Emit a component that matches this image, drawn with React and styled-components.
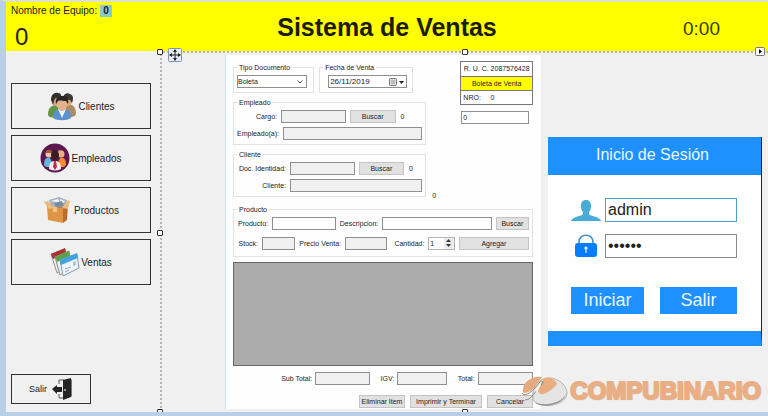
import React from "react";
import styled, { createGlobalStyle } from "styled-components";

const sans = `"Liberation Sans", Arial, sans-serif`;

const GlobalStyle = createGlobalStyle`
  *, *::before, *::after { box-sizing: border-box; }
  body { margin: 0; background: #f0f0f0; color: #222; font-family: ${sans}; }
  button, input, select { font: inherit; color: inherit; margin: 0; border-radius: 0; }
`;

const Window = styled.div`
  min-height: 100vh;
  display: flex;
  flex-direction: column;
  overflow: hidden;
  background: #f0f0f0;
  border-top: 2px solid #dfe2c8;
  border-left: 6px solid #b9cfe8;
  border-bottom: 4px solid #b9cfe8;
`;

const Header = styled.header`
  display: grid;
  grid-template-columns: 1fr 238px 1fr;
  align-items: center;
  height: 49px;
  background: #ffff00;
`;

const Machine = styled.div`
  align-self: start;
  padding: 2px 0 0 5px;
  font-size: 10px;
  line-height: 13px;
`;

const MachineValue = styled.b`
  display: inline-block;
  width: 12px;
  line-height: 12px;
  text-align: center;
  color: #123;
  background: #8cc8c8;
`;

const Count = styled.div`
  padding-left: 4px;
  font-size: 24px;
  line-height: 28px;
  margin-top: 6px;
`;

const Title = styled.h1`
  margin: 0;
  font-size: 25px;
  line-height: 30px;
  font-weight: bold;
  text-align: center;
  white-space: nowrap;
  color: #1c1c00;
`;

const Clock = styled.time`
  justify-self: end;
  padding-right: 48px;
  font-size: 19px;
  line-height: 22px;
  color: #3a3a00;
  padding-top: 4px;
`;

const Body = styled.div`
  flex: 1;
  display: flex;
`;

const Sidebar = styled.nav`
  flex: 0 0 154px;
  display: flex;
  flex-direction: column;
  gap: 6px;
  padding: 32px 9px 8px 5px;
`;

const NavButton = styled.button`
  display: flex;
  align-items: center;
  justify-content: center;
  gap: ${(p) => (p.$small ? "4px" : "1px")};
  width: ${(p) => (p.$small ? "80px" : "100%")};
  height: ${(p) => (p.$small ? "30px" : "46px")};
  margin-top: ${(p) => (p.$small ? "auto" : "0")};
  padding: 0;
  border: 1px solid #333;
  background: #f0f0f0;
  font-size: ${(p) => (p.$small ? "9px" : "10px")};
  svg { flex: none; }
`;

const Workspace = styled.main`
  position: relative;
  flex: 1;
  display: grid;
  grid-template-columns: 63fr 316fr 7fr 214fr 6fr;
  padding: 2px 0 3px;
  border-top: 2px dotted #b5b5a0;
  border-left: 2px dotted #b5b5b5;
`;

const Handle = styled.i`
  position: absolute;
  left: ${(p) => p.$left};
  top: ${(p) => p.$top};
  width: 6px;
  height: 6px;
  transform: translate(-50%, -50%);
  border: 1px solid #333;
  border-radius: 1px;
  background: #fff;
`;

const MoveGrip = styled.svg`
  position: absolute;
  left: 6px;
  top: -5px;
`;

const SmartTag = styled.svg`
  position: absolute;
  right: 3px;
  top: -6px;
`;

const Sale = styled.form`
  grid-column: 2;
  min-width: 0;
  display: flex;
  flex-direction: column;
  padding: 6px 8px 1px 7px;
  border-left: 1px solid #cfe2f2;
  background: #fefefe;
  font-size: 7px;
  line-height: 9px;
`;

const Upper = styled.div`
  display: grid;
  grid-template-columns: minmax(0, 194fr) minmax(0, 107fr);
`;

const Groups = styled.div`
  display: flex;
  flex-direction: column;
  gap: 5px;
  padding-top: 2px;
`;

const GroupRow = styled.div`
  display: grid;
  grid-template-columns: minmax(0, 81fr) minmax(0, 94fr);
  gap: 5px;
  margin-right: 13px;
`;

const Group = styled.fieldset`
  min-width: 0;
  margin: 0;
  padding: 3px 3px 4px;
  border: 1px solid #e2e2e2;
  display: flex;
  flex-direction: column;
  gap: ${(p) => p.$gap || "4px"};
`;

const Legend = styled.legend`
  padding: 0 2px;
  line-height: 9px;
`;

const Row = styled.div`
  display: flex;
  align-items: center;
  gap: 4px;
  height: 13px;
`;

const Label = styled.label`
  flex: 0 0 ${(p) => p.$width || "auto"};
  text-align: right;
  white-space: nowrap;
`;

const Field = styled.input`
  flex: ${(p) => p.$grow || 1} 1 0;
  min-width: 0;
  width: 100%;
  height: 13px;
  padding: 0 1px;
  border: 1px solid #8f8f8f;
  background: ${(p) => (p.readOnly ? "#f0f0f0" : "#fff")};
  outline: none;
`;

const Value = styled.output`
  flex: ${(p) => p.$grow || 1} 1 0;
  padding-left: 1px;
`;

const Button = styled.button`
  flex: ${(p) => p.$grow || 1} 1 0;
  min-width: 0;
  height: 13px;
  padding: 0;
  border: 1px solid #c4c4c4;
  background: #e1e1e1;
  line-height: 9px;
  text-align: center;
  white-space: nowrap;
`;

const Picker = styled.div`
  display: flex;
  align-items: center;
  height: 13px;
  margin: ${(p) => p.$margin || "0"};
  border: 1px solid #8f8f8f;
  background: #fff;
  > svg { flex: none; margin-right: 3px; }
`;

const Select = styled.select`
  appearance: none;
  flex: 1;
  min-width: 0;
  padding: 0;
  border: 0;
  outline: none;
  background: transparent;
`;

const PickerInput = styled.input`
  flex: 1;
  min-width: 0;
  width: 100%;
  height: 11px;
  padding: 0 1px;
  border: 0;
  outline: none;
  background: transparent;
  font-size: ${(p) => (p.$large ? "8px" : "7px")};
`;

const IconButton = styled.button`
  display: flex;
  padding: 0 1px 0 0;
  border: 0;
  background: transparent;
`;

const Spinner = styled.div`
  display: flex;
  flex: 26 1 0;
  min-width: 0;
  height: 13px;
  border: 1px solid #b4b4b4;
  background: #fff;
`;

const SpinButtons = styled.div`
  display: flex;
  flex-direction: column;
  background: #ececec;
`;

const SpinButton = styled.button`
  display: flex;
  align-items: center;
  justify-content: center;
  width: 10px;
  height: 5px;
  padding: 0;
  border: 0;
  background: transparent;
`;

const Side = styled.div`
  display: flex;
  flex-direction: column;
  padding-left: 34px;
`;

const Ruc = styled.div`
  border: 1px solid #777;
  background: #fff;
`;

const RucLine = styled.div`
  height: 14px;
  line-height: 13px;
  padding: 0 2px;
  text-align: ${(p) => (p.$center ? "center" : "left")};
  white-space: pre;
  background: ${(p) => (p.$yellow ? "#ffff00" : "#fff")};
  & + & { border-top: 1px solid #777; }
`;

const NumberBox = styled.div`
  display: flex;
  margin: 6px 4px 0 1px;
`;

const Loose = styled.output`
  margin: auto 0 -3px -28px;
`;

const ProductGroup = styled(Group)`
  margin-top: 8px;
  padding-bottom: 6px;
`;

const Grid = styled.div`
  flex: 1;
  min-height: 60px;
  margin-top: 5px;
  border: 1px solid #666;
  background: #ababab;
`;

const Totals = styled.div`
  display: grid;
  grid-template-columns: minmax(0, 80fr) minmax(0, 55fr) minmax(0, 22fr) minmax(0, 50fr) minmax(0, 25fr) minmax(0, 56fr);
  align-items: center;
  column-gap: 3px;
  margin-top: 6px;
`;

const Actions = styled.div`
  display: grid;
  grid-template-columns: minmax(0, 46fr) minmax(0, 72fr) minmax(0, 46fr);
  gap: 5px;
  width: 58%;
  margin: 10px 0 0 auto;
`;

const Login = styled.form`
  grid-column: 4;
  align-self: start;
  margin-top: 82px;
  border-right: 1px solid #223;
  border-bottom: 15px solid #1e90ff;
  background: #fff;
`;

const LoginTitle = styled.h2`
  margin: 0;
  height: 38px;
  padding-right: 4px;
  font-size: 16px;
  font-weight: normal;
  line-height: 35px;
  text-align: center;
  color: #e8f8ff;
  background: #1e90ff;
`;

const LoginBody = styled.div`
  display: grid;
  row-gap: 12px;
  padding: 23px 24px 17px 23px;
`;

const LoginRow = styled.div`
  display: grid;
  grid-template-columns: 30px 1fr;
  column-gap: 4px;
  align-items: center;
`;

const LoginLabel = styled.label`
  display: flex;
  justify-content: center;
`;

const LoginInput = styled.input`
  min-width: 0;
  width: 100%;
  height: 24px;
  padding: 0 2px;
  border: 1px solid ${(p) => (p.$active ? "#4f9fc8" : "#8a8a8a")};
  outline: none;
  background: #fff;
  font-size: 16px;
`;

const LoginActions = styled.div`
  display: grid;
  grid-template-columns: 73fr 77fr;
  gap: 16px;
  margin-top: 17px;
`;

const LoginButton = styled.button`
  height: 27px;
  padding: 0;
  border: 0;
  background: #1e90ff;
  color: #e8f8ff;
  font-size: 18px;
  line-height: 27px;
`;

const Watermark = styled.div`
  position: absolute;
  right: 7px;
  bottom: 5px;
  display: flex;
  align-items: center;
  gap: 2px;
  font-size: 24px;
  line-height: 32px;
  font-weight: bold;
  color: #e9ae84;
  -webkit-text-stroke: 2px #e9ae84;
  text-shadow: 1px 1px 1px #b9b0a8;
  pointer-events: none;
`;

const ClientsIcon = () => (
  <svg width="30" height="30" viewBox="0 0 30 30" aria-hidden="true">
    <path d="M1 24c0-6 2-9 7-10l5 4-1 8C7 27 2 27 1 24z" fill="#629744" />
    <path d="M29 23c0-6-2-9-7-10l-5 4 1 9c5 1 10 0 11-3z" fill="#a98d68" />
    <ellipse cx="9" cy="10" rx="4" ry="5" fill="#d8a980" />
    <path d="M4 9c0-5 3-8 7-7 3 0 4 3 3 6-3-2-6-2-7 2L6 14 4 9z" fill="#34302f" />
    <ellipse cx="21" cy="10" rx="4" ry="5" fill="#d8a980" />
    <path d="M16 8c0-5 4-7 7-5 3 1 4 4 2 9l-2-3c-2 0-4-1-7-1z" fill="#3f3632" />
    <path d="M6 27c0-7 3-9 9-9s9 2 9 9c-4 3-14 3-18 0z" fill="#5b91cd" />
    <path d="M11 18h8l-4 9z" fill="#eff7ff" />
    <ellipse cx="15" cy="14" rx="5" ry="6" fill="#e3b18b" />
    <path d="M9 13c-1-6 2-8 7-8 4 0 6 3 5 8l-2-3c-4 0-6-1-8 0z" fill="#282624" />
  </svg>
);

const StaffIcon = () => (
  <svg width="30" height="30" viewBox="0 0 30 30" aria-hidden="true">
    <circle cx="15" cy="15" r="14.5" fill="#5d174f" />
    <circle cx="9" cy="11" r="3.5" fill="#efc4aa" />
    <path d="M6 9c0-3 6-3 7 1H6zM17 9c1-3 6-3 7 1v4z" fill="#a6593a" />
    <circle cx="21" cy="11" r="3.5" fill="#e9b089" />
    <path d="M4 22c0-6 2-8 6-7l4 9H6z" fill="#62b7df" />
    <path d="M26 22c0-6-2-8-6-7l-4 9h8z" fill="#f28b36" />
    <path d="M9 26c0-6 2-8 6-8s6 2 6 8c-4 2-8 2-12 0z" fill="#f6eef2" />
    <ellipse cx="15" cy="12" rx="4" ry="5" fill="#382022" />
    <path d="M14 18h2l1 6-2 3-2-3z" fill="#c22c42" />
  </svg>
);

const BoxIcon = () => (
  <svg width="30" height="30" viewBox="0 0 30 30" aria-hidden="true">
    <path d="M4 9l12-3 8 4-1 6H5z" fill="#a6642d" />
    <path d="M6 5l10-3 8 3-2 7H8z" fill="#a9b2be" />
    <path d="M8 6l7-2 2 4zM17 4l5 2-4 4z" fill="#f4f7fa" />
    <path d="M11 8l8-2 2 5-8 1z" fill="#788b9f" />
    <path d="M4 11l16 2v15L5 25z" fill="#dd9646" />
    <path d="M20 13l5-2-1 14-4 3z" fill="#b96f2b" />
    <path d="M1 7l4-1 6 7-5 1zM19 13l6-8 2 1-2 8z" fill="#ebbc7b" />
    <path d="M10 12h4v5h-4z" fill="#f0c57f" />
  </svg>
);

const CardsIcon = () => (
  <svg width="30" height="30" viewBox="0 0 30 30" aria-hidden="true">
    <path d="M1 7l14-5 4 17-12 7z" fill="#f1eeee" stroke="#8f9292" />
    <path d="M1 7l14-6 1 5L3 12z" fill="#a93430" />
    <path d="M5 10l14-6 3 17-12 7z" fill="#eff1ee" stroke="#879087" />
    <path d="M5 10l14-6 1 5L7 15z" fill="#5ca24c" />
    <path d="M10 13l17-6 2 14-16 8z" fill="#edf4fb" stroke="#8199b0" />
    <path d="M10 13l17-7 1 5-17 7z" fill="#43a1dd" />
    <path d="M15 22l6-2M15 25l4-2" stroke="#9caab8" />
    <path d="M23 15l3-1v4l-3 1z" fill="#adc6df" />
  </svg>
);

const DoorIcon = () => (
  <svg width="22" height="22" viewBox="0 0 22 22" aria-hidden="true">
    <path d="M8 6V2h5M8 16v4h5" fill="none" stroke="#555" />
    <path d="M12 2l8-2v19l-8 3z" fill="#252525" />
    <path d="M20 1v18l1-1V2z" fill="#777" />
    <path d="M1 11l5-4v2h5v5H6v2z" fill="#222" />
    <circle cx="14" cy="12" r="1" fill="#bbb" />
  </svg>
);

const MouseLogo = () => (
  <svg width="47" height="32" viewBox="0 0 47 32" aria-hidden="true">
    <path d="M12 24C10 13 17 3 28 3c10 0 18 8 18 15 0 9-13 14-25 12-5-1-8-3-9-6z" fill="#e4e4e2" stroke="#b5b5b5" />
    <path d="M14 27c9 5 27 1 31-8-2 10-23 16-31 8z" fill="#777" opacity=".7" />
    <path d="M2 14C3 6 12 1 21 2l-6 8c-2 4-6 7-11 8-2 0-3-2-2-4z" fill="#e6aa7d" />
    <path d="M23 3c6-2 12 2 13 6-2 3-8 8-13 10-3 1-6-1-6-4z" fill="#e8ad80" />
    <path d="M1 18c2 4 8 0 12-4l6-7c2-2 4 0 2 2l-9 11c-2 3-5 5-8 5" fill="none" stroke="#898781" />
    <path d="M14 16l5-8 1 2-4 7z" fill="#fff6dd" />
  </svg>
);

const UserIcon = () => (
  <svg width="30" height="22" viewBox="0 0 30 22" aria-hidden="true">
    <path d="M10 7c0-4 2-6 5-6s5 2 5 6c0 3-1 5-2 6v2c1 2 6 2 9 4 2 1 3 2 3 3H0c0-1 1-2 3-3 3-2 8-2 9-4v-2c-1-1-2-3-2-6z" fill="#48abd3" />
  </svg>
);

const LockIcon = () => (
  <svg width="22" height="24" viewBox="0 0 22 24" aria-hidden="true">
    <path d="M4 11V8c0-9 14-9 14 0v3" fill="none" stroke="#3b8fcb" strokeWidth="1.6" />
    <rect x="0" y="9" width="22" height="14" rx="3" fill="#087dfa" />
    <circle cx="11" cy="14" r="1.6" fill="#e4f4ff" />
    <path d="M10.4 14h1.2v5h-1.2z" fill="#e4f4ff" />
  </svg>
);

const Chevron = () => (
  <svg width="6" height="4" viewBox="0 0 6 4" aria-hidden="true">
    <path d="M.5.5L3 3 5.5.5" fill="none" stroke="#444" />
  </svg>
);

const CalendarIcon = () => (
  <svg width="16" height="9" viewBox="0 0 16 9" aria-hidden="true">
    <rect x=".5" y="1.5" width="7" height="7" rx="1" fill="#dedede" stroke="#777" />
    <path d="M2 4h4M2 6h4" stroke="#999" />
    <path d="M10 4h5l-2.5 3z" fill="#222" />
  </svg>
);

const Arrow = ({ down }) => (
  <svg width="5" height="3" viewBox="0 0 5 3" aria-hidden="true">
    <path d={down ? "M0 0h5L2.5 3z" : "M0 3h5L2.5 0z"} fill="#333" />
  </svg>
);

const handles = [
  ["-2px", "-1px"],
  ["50%", "-1px"],
  ["-2px", "50%"],
  ["-2px", "100%"],
  ["50%", "100%"],
];

export default function App() {
  return (
    <Window>
      <GlobalStyle />
      <Header>
        <Machine>
          Nombre de Equipo: <MachineValue>0</MachineValue>
          <Count>0</Count>
        </Machine>
        <Title>Sistema de Ventas</Title>
        <Clock>0:00</Clock>
      </Header>
      <Body>
        <Sidebar>
          <NavButton type="button"><ClientsIcon />Clientes</NavButton>
          <NavButton type="button"><StaffIcon />Empleados</NavButton>
          <NavButton type="button"><BoxIcon />Productos</NavButton>
          <NavButton type="button"><CardsIcon />Ventas</NavButton>
          <NavButton type="button" $small>Salir<DoorIcon /></NavButton>
        </Sidebar>
        <Workspace>
          <Sale onSubmit={(e) => e.preventDefault()}>
            <Upper>
              <Groups>
                <GroupRow>
                  <Group>
                    <Legend>Tipo Documento</Legend>
                    <Picker $margin="0 3px 0 0">
                      <Select aria-label="Tipo Documento" defaultValue="Boleta">
                        <option>Boleta</option>
                        <option>Factura</option>
                      </Select>
                      <Chevron />
                    </Picker>
                  </Group>
                  <Group>
                    <Legend>Fecha de Venta</Legend>
                    <Picker $margin="0 2px 0 5px">
                      <PickerInput $large aria-label="Fecha de Venta" defaultValue="26/11/2019" />
                      <IconButton type="button" aria-label="Calendario"><CalendarIcon /></IconButton>
                    </Picker>
                  </Group>
                </GroupRow>
                <Group>
                  <Legend>Empleado</Legend>
                  <Row>
                    <Label $width="40px" htmlFor="cargo">Cargo:</Label>
                    <Field id="cargo" readOnly $grow={64} />
                    <Button type="button" $grow={46}>Buscar</Button>
                    <Value $grow={23}>0</Value>
                  </Row>
                  <Row>
                    <Label $width="40px" htmlFor="empleado">Empleado(a):</Label>
                    <Field id="empleado" readOnly />
                  </Row>
                </Group>
                <Group>
                  <Legend>Cliente</Legend>
                  <Row>
                    <Label $width="49px" htmlFor="doc">Doc. Identidad:</Label>
                    <Field id="doc" readOnly $grow={64} />
                    <Button type="button" $grow={46}>Buscar</Button>
                    <Value $grow={14}>0</Value>
                  </Row>
                  <Row>
                    <Label $width="49px" htmlFor="cliente">Cliente:</Label>
                    <Field id="cliente" readOnly />
                  </Row>
                </Group>
              </Groups>
              <Side>
                <Ruc>
                  <RucLine $center>R. U. C. 2087576428</RucLine>
                  <RucLine $center $yellow>Boleta de Venta</RucLine>
                  <RucLine>{"NRO:     0"}</RucLine>
                </Ruc>
                <NumberBox><Field aria-label="Número" defaultValue="0" /></NumberBox>
                <Loose>0</Loose>
              </Side>
            </Upper>
            <ProductGroup $gap="7px">
              <Legend>Producto</Legend>
              <Row>
                <Label $width="31px" htmlFor="producto">Producto:</Label>
                <Field id="producto" $grow={63} />
                <Label $width="38px" htmlFor="descripcion">Descripcion:</Label>
                <Field id="descripcion" $grow={111} />
                <Button type="button" $grow={33}>Buscar</Button>
              </Row>
              <Row>
                <Label $width="21px" htmlFor="stock">Stock:</Label>
                <Field id="stock" readOnly $grow={31} />
                <Label $width="42px" htmlFor="precio">Precio Venta:</Label>
                <Field id="precio" readOnly $grow={41} />
                <Label $width="33px" htmlFor="cantidad">Cantidad:</Label>
                <Spinner>
                  <PickerInput id="cantidad" defaultValue="1" />
                  <SpinButtons>
                    <SpinButton type="button" aria-label="Más"><Arrow /></SpinButton>
                    <SpinButton type="button" aria-label="Menos"><Arrow down /></SpinButton>
                  </SpinButtons>
                </Spinner>
                <Button type="button" $grow={73}>Agregar</Button>
              </Row>
            </ProductGroup>
            <Grid role="grid" aria-label="Detalle de venta" />
            <Totals>
              <Label htmlFor="subtotal">Sub Total:</Label>
              <Field id="subtotal" readOnly />
              <Label htmlFor="igv">IGV:</Label>
              <Field id="igv" readOnly />
              <Label htmlFor="total">Total:</Label>
              <Field id="total" readOnly />
            </Totals>
            <Actions>
              <Button type="button">Eliminar Item</Button>
              <Button type="button">Imprimir y Terminar</Button>
              <Button type="button">Cancelar</Button>
            </Actions>
          </Sale>
          <Login onSubmit={(e) => e.preventDefault()}>
            <LoginTitle>Inicio de Sesión</LoginTitle>
            <LoginBody>
              <LoginRow>
                <LoginLabel htmlFor="usuario" aria-label="Usuario"><UserIcon /></LoginLabel>
                <LoginInput id="usuario" $active defaultValue="admin" />
              </LoginRow>
              <LoginRow>
                <LoginLabel htmlFor="clave" aria-label="Contraseña"><LockIcon /></LoginLabel>
                <LoginInput id="clave" type="password" defaultValue="123456" />
              </LoginRow>
              <LoginActions>
                <LoginButton type="submit">Iniciar</LoginButton>
                <LoginButton type="button">Salir</LoginButton>
              </LoginActions>
            </LoginBody>
          </Login>
          {handles.map(([left, top]) => (
            <Handle key={left + top} $left={left} $top={top} />
          ))}
          <MoveGrip width="14" height="14" viewBox="0 0 14 14" aria-hidden="true">
            <rect x=".5" y=".5" width="13" height="13" rx="1" fill="#e6edf8" stroke="#8294b4" />
            <path d="M7 2v10M2 7h10" stroke="#222" />
            <path d="M7 1l2 3H5zM7 13l2-3H5zM1 7l3-2v4zM13 7l-3-2v4z" fill="#222" />
          </MoveGrip>
          <SmartTag width="10" height="9" viewBox="0 0 10 9" aria-hidden="true">
            <rect x=".5" y=".5" width="9" height="8" rx="1" fill="#fff" stroke="#777" />
            <path d="M4 2l3 2.5L4 7z" fill="#111" />
          </SmartTag>
          <Watermark><MouseLogo />COMPUBINARIO</Watermark>
        </Workspace>
      </Body>
    </Window>
  );
}
